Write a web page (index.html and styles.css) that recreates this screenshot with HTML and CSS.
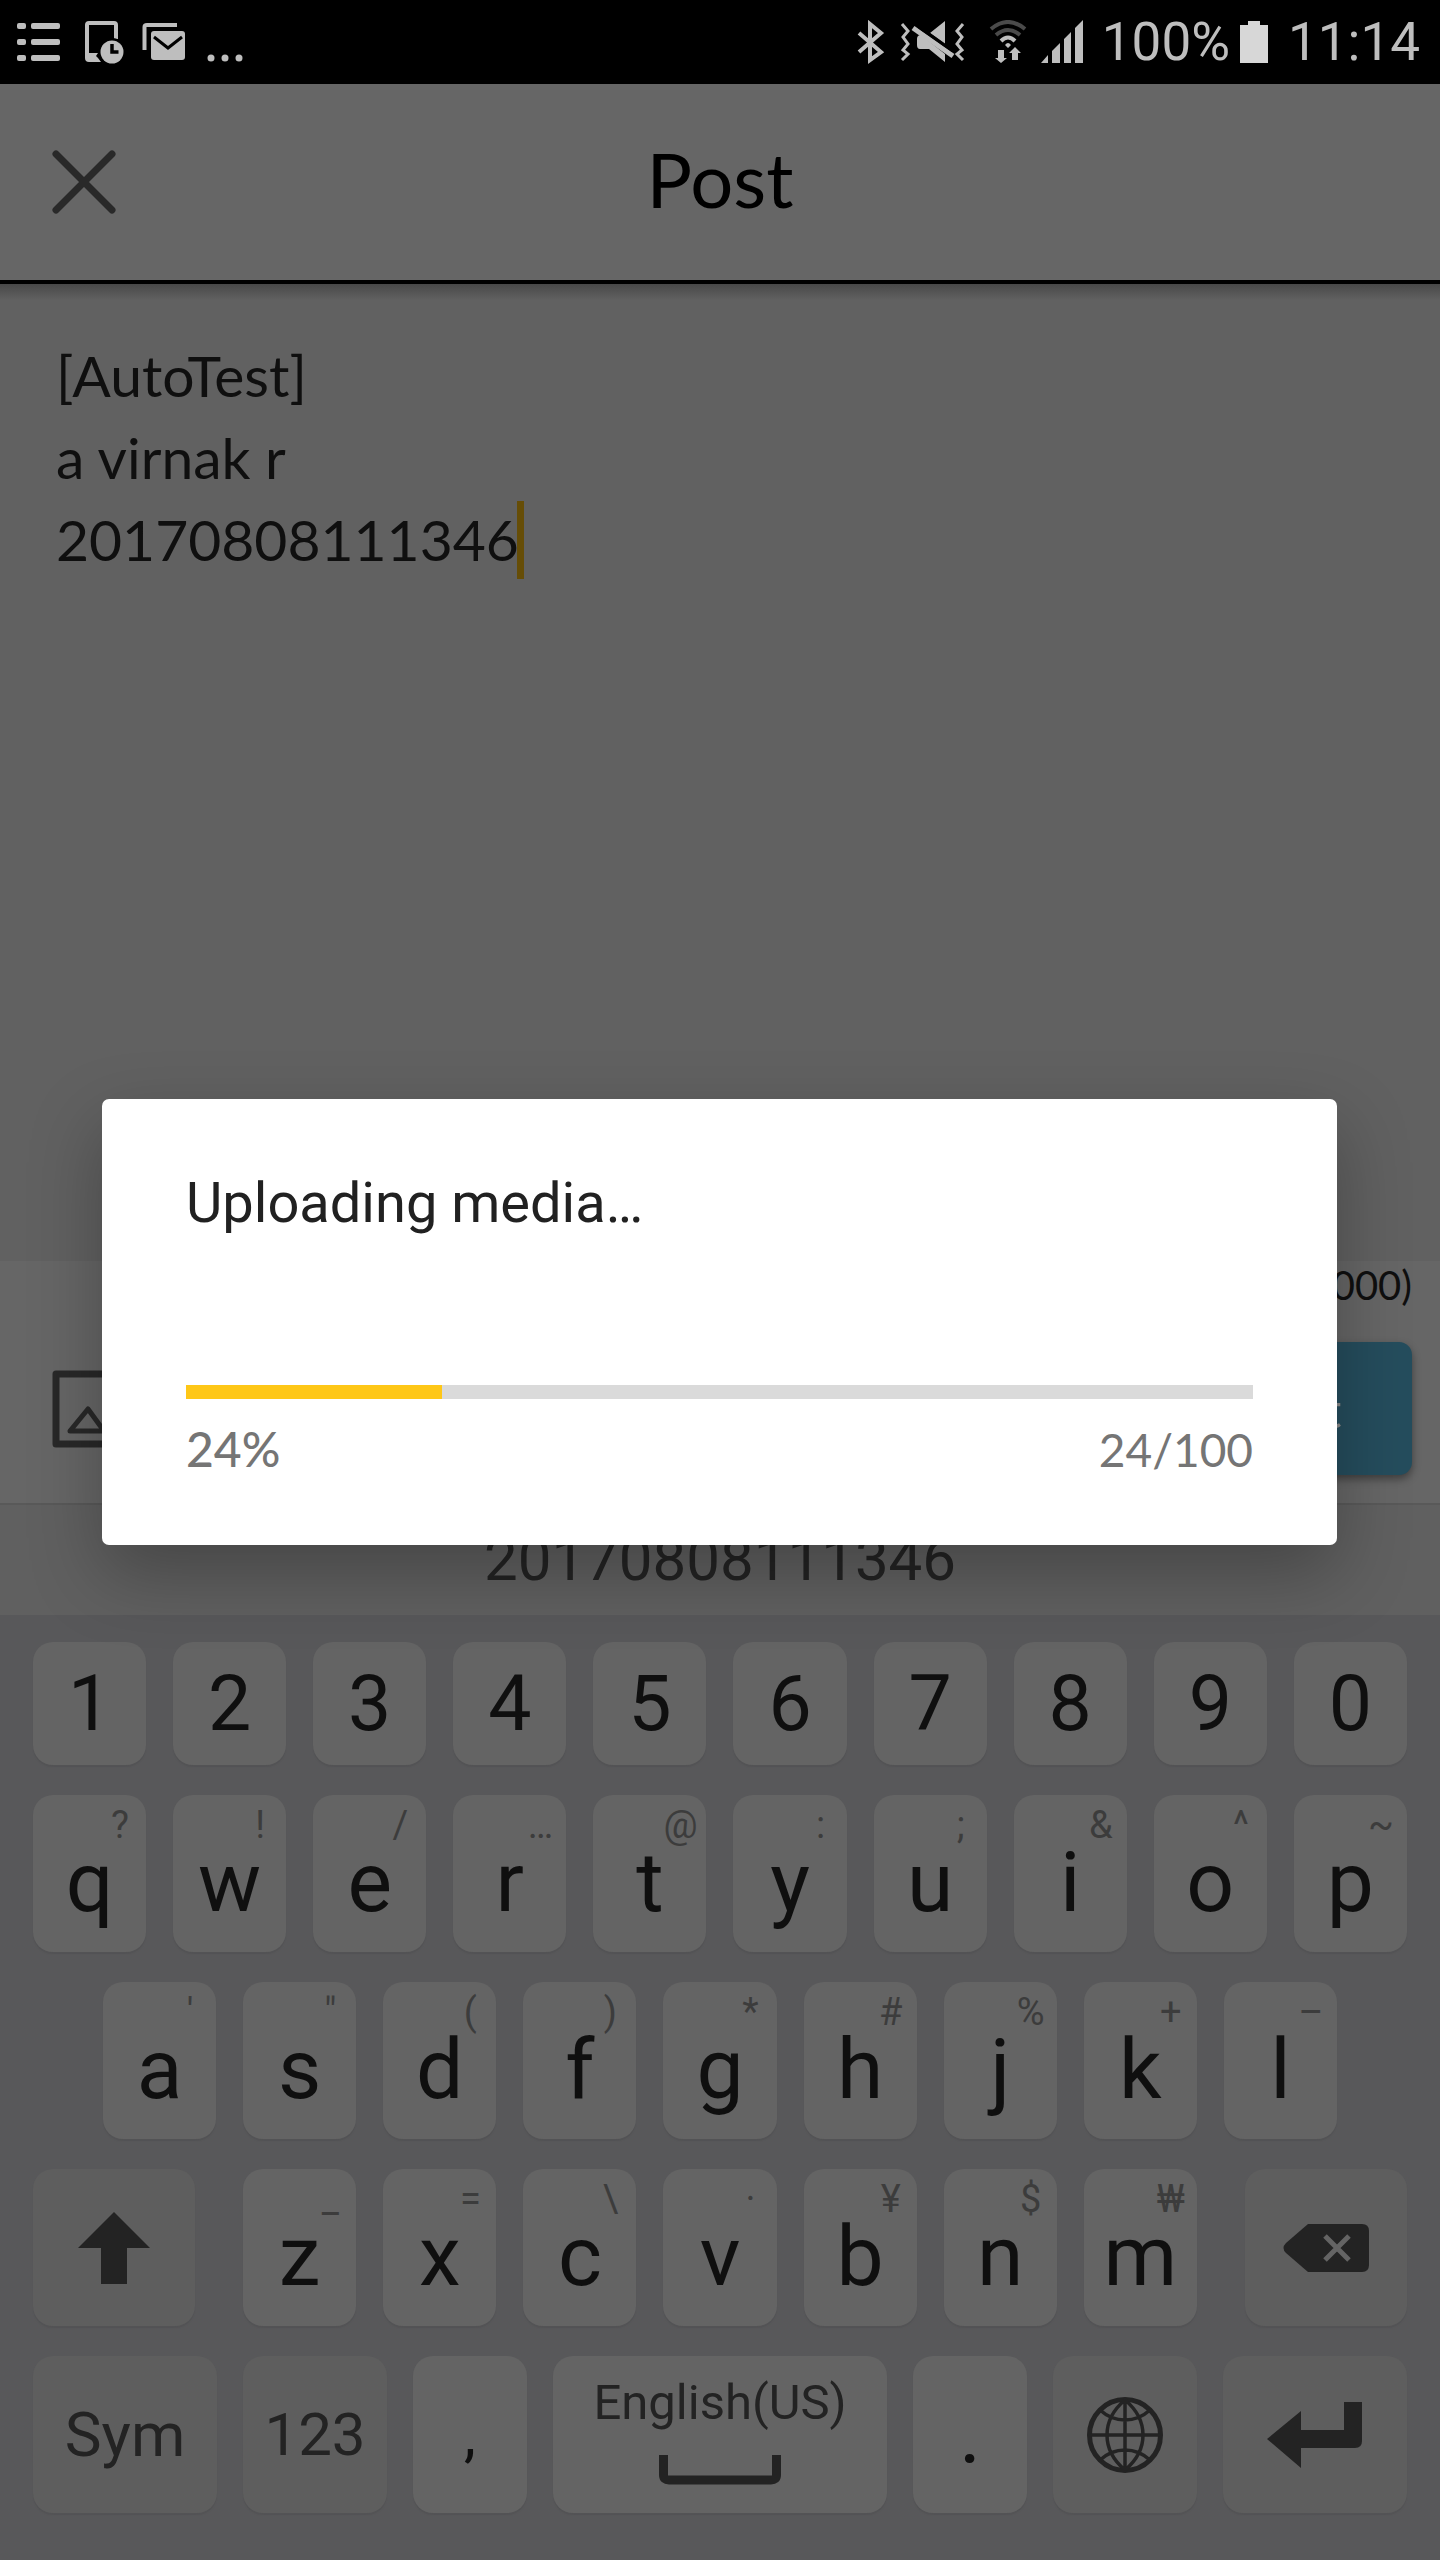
FILE: index.html
```html
<!DOCTYPE html>
<html lang="en">
<head>
<meta charset="utf-8">
<meta name="viewport" content="width=device-width, initial-scale=1">
<title>Post</title>
<link rel="stylesheet" href="styles.css">
</head>
<body>
<div class="screen">
  <div class="status">
    <div class="status-left">
      <svg width="44" height="44" viewBox="0 0 44 44" aria-hidden="true"><g fill="#bebebe"><rect x="1" y="3" width="9" height="6" rx="2"/><rect x="15" y="3" width="29" height="6" rx="2"/><rect x="1" y="19" width="9" height="6" rx="2"/><rect x="15" y="19" width="29" height="6" rx="2"/><rect x="1" y="35" width="9" height="6" rx="2"/><rect x="15" y="35" width="29" height="6" rx="2"/></g></svg>
      <svg width="40" height="44" viewBox="0 0 40 44" aria-hidden="true"><path fill="#bebebe" fill-rule="evenodd" d="M5 1H30Q34 1 34 5V19H30V5H5V33H14L12 36L14 38L17 42H5Q1 42 1 38V5Q1 1 5 1Z"/><circle cx="28" cy="32" r="14" fill="#000"/><circle cx="28" cy="32" r="11.500" fill="#bebebe"/><path d="M28 24V32H34.500" fill="none" stroke="#000" stroke-width="3.500"/></svg>
      <svg width="44" height="44" viewBox="0 0 44 44" aria-hidden="true"><path d="M2.500 30V7Q2.500 5 5 5H35" fill="none" stroke="#bebebe" stroke-width="4"/><rect x="9" y="11" width="34" height="29" rx="3" fill="#bebebe"/><path d="M12 17L26 28L40 17" fill="none" stroke="#000" stroke-width="3"/></svg>
      <svg width="40" height="44" viewBox="0 0 40 44" aria-hidden="true"><g fill="#bebebe"><circle cx="5" cy="38" r="3.500"/><circle cx="19" cy="38" r="3.500"/><circle cx="33" cy="38" r="3.500"/></g></svg>
    </div>
    <div class="status-right">
      <svg width="30" height="44" viewBox="0 0 30 44" aria-hidden="true"><path d="M3 13L25 32L14 40V4L25 13L3 32" fill="none" stroke="#bebebe" stroke-width="4"/></svg>
      <svg class="mute" width="66" height="44" viewBox="0 0 66 44" aria-hidden="true"><g fill="none" stroke="#bebebe" stroke-width="3"><path d="M2 4L8 11L3 17L8 24L3 30L8 34L2 40"/><path d="M63 4L57 11L62 17L57 24L62 30L57 34L63 40"/></g><path fill="#bebebe" d="M45 1V24L30 13ZM17 19Q17 15 21 15L45 34V42L29 29H20Q17 29 17 25Z"/><path d="M13 8L53 36" stroke="#bebebe" stroke-width="5"/><path d="M19 7L53 31" stroke="#000" stroke-width="3"/></svg>
      <svg class="wifi" width="38" height="44" viewBox="0 0 38 44" aria-hidden="true"><g fill="none" stroke-width="4"><path d="M2 9Q19 -5 36 9" stroke="#4a4a4a"/><path d="M7 15Q19 5 31 15" stroke="#4a4a4a"/><path d="M12 21Q19 14 26 21" stroke="#bebebe"/></g><path fill="#bebebe" d="M16 25Q19 21 22 25L19 28ZM9 30H15V38H18L12 43L6 38H9ZM26 27L32 33H29V40H23V33H20Z"/></svg>
      <svg class="signal" width="44" height="44" viewBox="0 0 44 44" aria-hidden="true"><path fill="#bebebe" d="M1 43L8 35V43ZM12 43V31L20 23V43ZM24 43V19L31 12V43ZM35 43V8L43 0V43Z"/></svg>
      <span class="battery-text">100%</span>
      <svg class="battery" width="28" height="44" viewBox="0 0 28 44" aria-hidden="true"><path fill="#d7d7d7" d="M0 5H8V1H20V5H28V43H0Z"/></svg>
      <span>11:14</span>
    </div>
  </div>

  <header class="header">
    <button class="close" aria-label="Close"><svg width="64" height="64" viewBox="0 0 64 64" aria-hidden="true"><path d="M4 4L60 60M60 4L4 60" stroke="#292929" stroke-width="7" stroke-linecap="round"/></svg></button>
    <h1>Post</h1>
  </header>

  <main class="editor">
    <textarea class="message" aria-label="Message" spellcheck="false">[AutoTest]
a virnak r
20170808111346</textarea>
    <span class="caret"></span>
  </main>

  <section class="toolbar">
    <span class="count">(36/1000)</span>
    <div class="actions">
      <button class="attach" aria-label="Add photo"><svg width="92" height="78" viewBox="0 0 92 78" aria-hidden="true"><g fill="none" stroke="#282828" stroke-width="7" stroke-linejoin="round"><rect x="4" y="4" width="84" height="70"/><path stroke-width="5" d="M18 61L36 39L52 61Z"/></g></svg></button>
      <button class="submit">Post</button>
    </div>
  </section>

  <section class="keyboard" aria-label="Keyboard">
    <div class="suggestion">20170808111346</div>
    <div class="keys">
      <div class="row numbers">
        <button>1</button><button>2</button><button>3</button><button>4</button><button>5</button><button>6</button><button>7</button><button>8</button><button>9</button><button>0</button>
      </div>
      <div class="row letters">
        <button><small>?</small>q</button>
        <button><small>!</small>w</button>
        <button><small>/</small>e</button>
        <button><small>…</small>r</button>
        <button><small>@</small>t</button>
        <button><small>:</small>y</button>
        <button><small>;</small>u</button>
        <button><small>&amp;</small>i</button>
        <button><small>^</small>o</button>
        <button><small>~</small>p</button>
      </div>
      <div class="row letters inset">
        <button><small>'</small>a</button>
        <button><small>"</small>s</button>
        <button><small>(</small>d</button>
        <button><small>)</small>f</button>
        <button><small>*</small>g</button>
        <button><small>#</small>h</button>
        <button><small>%</small>j</button>
        <button><small>+</small>k</button>
        <button><small>–</small>l</button>
      </div>
      <div class="row shifted">
        <button class="fn" aria-label="Shift"><svg width="72" height="72" viewBox="0 0 72 72" aria-hidden="true"><path fill="#232323" d="M36 0L72 36H49V72H23V36H0Z"/></svg></button>
        <div class="row letters">
          <button><small>_</small>z</button>
          <button><small>=</small>x</button>
          <button><small>\</small>c</button>
          <button><small>·</small>v</button>
          <button><small>¥</small>b</button>
          <button><small>$</small>n</button>
          <button><small>₩</small>m</button>
        </div>
        <button class="fn" aria-label="Backspace"><svg width="86" height="50" viewBox="0 0 86 50" aria-hidden="true"><path fill="#232323" d="M25 1H79Q86 1 86 8V42Q86 49 79 49H25L3 30Q-2 25 3 20Z"/><path d="M42 13L66 37M66 13L42 37" stroke="#646464" stroke-width="5"/></svg></button>
      </div>
      <div class="row bottom">
        <button class="fn sym">Sym</button>
        <button class="fn">123</button>
        <button class="comma">,</button>
        <button class="space">English(US)<svg width="122" height="30" viewBox="0 0 122 30" aria-hidden="true"><path d="M4.500 0V20Q4.500 25 10 25H112Q117.500 25 117.500 20V0" fill="none" stroke="#232323" stroke-width="9"/></svg></button>
        <button class="period">.</button>
        <button class="fn" aria-label="Language"><svg width="76" height="76" viewBox="0 0 76 76" aria-hidden="true"><g fill="none" stroke="#232323" stroke-width="3.500"><circle cx="38" cy="38" r="35.500" stroke-width="5"/><path d="M38 3V73M3 38H73M38 3Q20 18 20 38T38 73M38 3Q56 18 56 38T38 73M13 13Q24 23 38 23T63 13M13 63Q24 53 38 53T63 63"/></g></svg></button>
        <button class="fn enter" aria-label="Enter"><svg width="96" height="66" viewBox="0 0 96 66" aria-hidden="true"><path fill="#232323" d="M0 37L34 9V28H77V0H95V39Q95 46 88 46H34V66Z"/></svg></button>
      </div>
    </div>
  </section>

  <div class="overlay">
    <div class="dialog" role="dialog" aria-labelledby="upload-title">
      <h2 id="upload-title">Uploading media…</h2>
      <progress value="24" max="100" aria-labelledby="upload-title"></progress>
      <div class="figures"><span class="percent">24%</span><span>24/100</span></div>
    </div>
  </div>
</div>
</body>
</html>
```
FILE: styles.css
```css
* { box-sizing: border-box; }

body {
  margin: 0;
  font-family: Roboto, sans-serif;
  background: #58585a;
}

button {
  margin: 0;
  padding: 0;
  border: 0;
  background: none;
  font: inherit;
  color: inherit;
}

svg { display: block; flex: none; }

.screen {
  position: relative;
  display: flex;
  flex-direction: column;
  min-height: 100vh;
}

/* Status bar */
.status {
  display: flex;
  justify-content: space-between;
  align-items: center;
  height: 84px;
  padding: 0 20px 0 16px;
  background: #000;
  color: #bebebe;
  font-size: 53px;
  line-height: 84px;
}
.status-left,
.status-right { display: flex; align-items: center; }
.status-left { gap: 24px; }
.status-left svg:nth-child(3) { margin: 0 -4px 0 -6px; }
.mute { margin-left: 14px; }
.wifi { margin-left: 23px; }
.signal { margin-left: 13px; }
.battery-text { margin-left: 18px; }
.battery { margin: 0 20px 0 10px; }

/* Title bar */
.header {
  display: grid;
  grid-template-columns: 64px 1fr 64px;
  align-items: center;
  height: 200px;
  padding: 0 52px;
  background: #666;
  border-bottom: 4px solid #000;
}
.header h1 {
  margin: 0;
  padding-bottom: 6px;
  text-align: center;
  font: 400 76px/96px Lato, sans-serif;
  color: #000;
}

/* Message editor */
.editor {
  position: relative;
  display: flex;
  flex: 1;
  background: linear-gradient(#484848, #616161 16px);
}
.message {
  flex: 1;
  width: 100%;
  padding: 50px 56px;
  border: 0;
  outline: 0;
  resize: none;
  background: none;
  color: #0f0f0f;
  font: 400 57px/82px Lato, sans-serif;
}
.caret {
  position: absolute;
  top: 217px;
  left: 517px;
  width: 7px;
  height: 78px;
  background: #664d06;
}

/* Attachment and submit */
.toolbar {
  display: flex;
  flex-direction: column;
  gap: 33px;
  padding: 0 28px 28px 52px;
  background: #666;
  font-family: Lato, sans-serif;
}
.count {
  align-self: flex-end;
  color: #0f0f0f;
  font-size: 40px;
  line-height: 48px;
}
.actions { display: flex; justify-content: space-between; align-items: center; }
.submit {
  width: 236px;
  height: 133px;
  border-radius: 13px;
  background: #254d5d;
  color: #8a8a8a;
  font-size: 49px;
  box-shadow: 0 4px 8px rgba(0, 0, 0, .4);
}

/* Keyboard */
.suggestion {
  border-top: 2px solid #595959;
  background: #606060;
  color: #232323;
  font-size: 60px;
  line-height: 110px;
  text-align: center;
}
.keys {
  display: flex;
  flex-direction: column;
  gap: 30px;
  padding: 27px 33px 47px;
  background: #58585a;
  color: #0f0f0f;
}
.row { display: flex; gap: 27px; }
.row button {
  display: flex;
  flex: 1;
  min-width: 0;
  height: 157px;
  align-items: center;
  justify-content: center;
  border-radius: 20px;
  background: #646464;
  box-shadow: 0 2px 1px #535355;
}
.row.numbers button { height: 123px; font-size: 77px; }
.letters button {
  flex-direction: column;
  justify-content: flex-start;
  padding-top: 8px;
  font-size: 84px;
  line-height: 72px;
}
.row.letters button { justify-content: flex-start; }
.letters small {
  align-self: flex-end;
  width: 52px;
  color: #3c3c3c;
  font-size: 38px;
  line-height: 44px;
  text-align: center;
}
.inset { padding: 0 70px; }
.shifted { gap: 48px; }
.shifted .letters { flex: 953; }
.shifted > .fn { flex: 162; }
.row .fn { background: #5e5e5e; color: #232323; }
.bottom { gap: 26px; font-size: 60px; }
.bottom .fn { flex: 144; }
.bottom .sym,
.bottom .enter { flex: 184; }
.bottom .sym { font-size: 62px; }
.bottom .comma,
.bottom .period { flex: 114; }
.bottom .period { font-size: 84px; }
.bottom .space {
  flex: 334;
  flex-direction: column;
  justify-content: flex-start;
  gap: 24px;
  padding-top: 19px;
  color: #232323;
  font-size: 49px;
  line-height: 56px;
}

/* Upload dialog */
.overlay {
  position: absolute;
  inset: 84px 0 0;
  display: flex;
  align-items: center;
  padding: 0 103px 0 102px;
}
.dialog {
  flex: 1;
  padding: 72px 84px 68px;
  border-radius: 7px;
  background: #fff;
  box-shadow: 0 28px 72px rgba(0, 0, 0, .28);
}
.dialog h2 {
  margin: 0 0 150px;
  color: #212121;
  font-size: 56px;
  font-weight: 400;
  line-height: 64px;
}
progress {
  display: block;
  width: 100%;
  height: 14px;
  border: 0;
  appearance: none;
  background: #dadada;
}
progress::-webkit-progress-bar { background: #dadada; }
progress::-webkit-progress-value { background: #fec717; }
.figures {
  display: flex;
  justify-content: space-between;
  align-items: baseline;
  height: 56px;
  margin-top: 22px;
  color: #757575;
  font: 400 46px/56px Lato, sans-serif;
}
.percent { font-size: 48px; font-weight: 500; }
```
